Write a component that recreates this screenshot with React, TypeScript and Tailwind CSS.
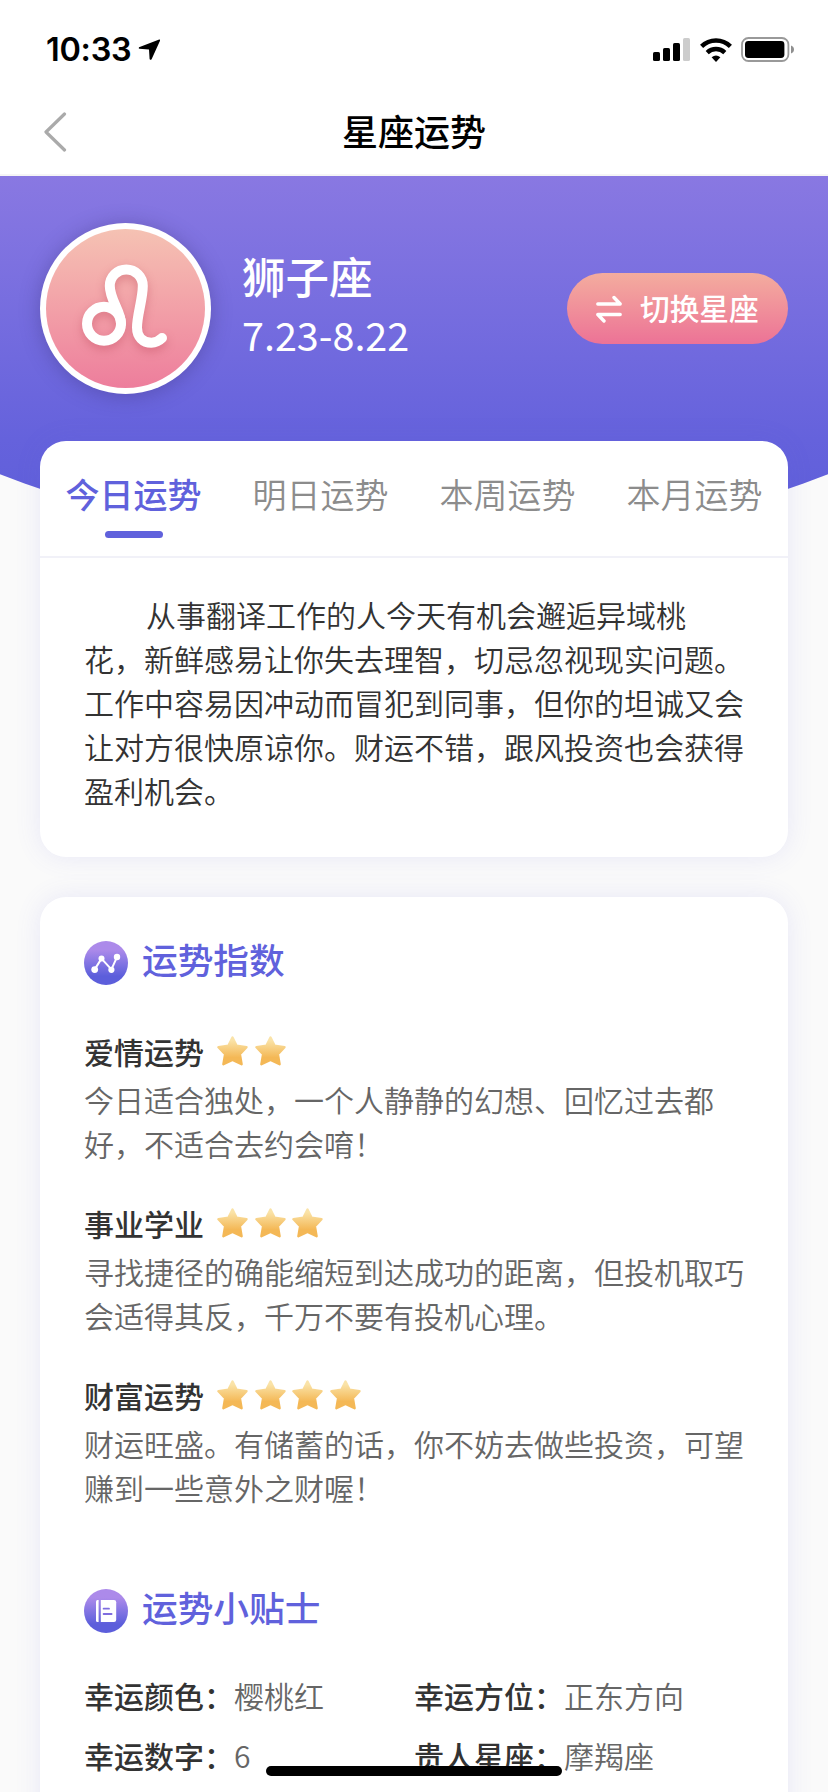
import React, { useState } from 'react';

interface FortuneItem {
    title: string;
    stars: number;
    lines: string[];
}

interface TipItem {
    label: string;
    value: string;
}

const tabs = ['今日运势', '明日运势', '本周运势', '本月运势'];

const summary = [
    '从事翻译工作的人今天有机会邂逅异域桃',
    '花，新鲜感易让你失去理智，切忌忽视现实问题。',
    '工作中容易因冲动而冒犯到同事，但你的坦诚又会',
    '让对方很快原谅你。财运不错，跟风投资也会获得',
    '盈利机会。',
];

const fortunes: FortuneItem[] = [
    { title: '爱情运势', stars: 2, lines: ['今日适合独处，一个人静静的幻想、回忆过去都', '好，不适合去约会唷！'] },
    { title: '事业学业', stars: 3, lines: ['寻找捷径的确能缩短到达成功的距离，但投机取巧', '会适得其反，千万不要有投机心理。'] },
    { title: '财富运势', stars: 4, lines: ['财运旺盛。有储蓄的话，你不妨去做些投资，可望', '赚到一些意外之财喔！'] },
];

const tips: TipItem[] = [
    { label: '幸运颜色：', value: '樱桃红' },
    { label: '幸运方位：', value: '正东方向' },
    { label: '幸运数字：', value: '6' },
    { label: '贵人星座：', value: '摩羯座' },
];

const StatusBar: React.FC = () => (
    <div className="flex h-[88px] items-start justify-between pl-[46px] pr-[33px] pt-[37px]">
        <div className="flex h-[25px] items-center gap-[7px]">
            <span className="pt-[2px] font-['Inter',sans-serif] text-[32.5px] font-semibold leading-none tracking-[-0.3px]">10:33</span>
            <svg width="23" height="22" viewBox="0 0 23 22">
                <path d="M21.2 0.5 L1 8.2 Q0.2 9.4 1.4 9.8 L11 10.6 L11.6 20 Q12.4 21.6 13.6 20.2 L22 1.8 Q22.4 0.4 21.2 0.5Z" />
            </svg>
        </div>
        <div className="flex h-[25px] items-center">
            <svg width="37" height="23" viewBox="0 0 37 23">
                <rect x="0" y="14" width="7" height="9" rx="1.6" />
                <rect x="10" y="10" width="7" height="13" rx="1.6" />
                <rect x="20" y="5" width="7" height="18" rx="1.6" />
                <rect x="30" y="0" width="7" height="23" rx="1.6" fill="#cccccc" />
            </svg>
            <svg className="ml-[10px]" width="32" height="24" viewBox="0 0 32 24">
                <g fill="none" stroke="#000" strokeWidth="4.4">
                    <path d="M1.6 8.4 A20.5 20.5 0 0 1 30.4 8.4" />
                    <path d="M7.2 14.6 A12.6 12.6 0 0 1 24.8 14.6" />
                </g>
                <path d="M11.6 19.3 Q16 15.6 20.4 19.3 L16 24Z" />
            </svg>
            <svg className="ml-[9px]" width="54" height="25" viewBox="0 0 54 25">
                <rect x="1" y="1" width="46.4" height="23" rx="6.5" fill="none" stroke="#999999" strokeWidth="1.8" />
                <rect x="4" y="4" width="39.4" height="17" rx="3.4" />
                <path d="M50 8.5 Q53 9.6 53 12.5 T50 16.5Z" fill="#8f8f8f" />
            </svg>
        </div>
    </div>
);

const LeoIcon: React.FC = () => (
    <svg width="171" height="171" viewBox="0 0 171 171" className="drop-shadow-[0_4px_5px_rgba(190,70,90,0.4)]">
        <g fill="none" stroke="#fff" strokeWidth="10" strokeLinecap="round">
            <circle cx="64" cy="100.8" r="17" />
            <path d="M81 100.6 C81 88 69.8 77 69.8 63 A16.5 16.5 0 0 1 102.8 63 C102.8 76 97 92 97 104.5 C97 114 103 119.7 111.4 119.7 C116.5 119.7 119 118 122 115" />
        </g>
    </svg>
);

const Star: React.FC = () => (
    <svg width="31" height="30" viewBox="0 0 31 30">
        <defs>
            <linearGradient id="star" x1="0" y1="0" x2="0" y2="1">
                <stop offset="0.1" stopColor="#fae3a8" />
                <stop offset="0.75" stopColor="#f4b856" />
            </linearGradient>
        </defs>
        <path
            d="M15.5 1.5 L19.6 9.8 L29.5 11.2 L22.9 18.2 L24.6 28.2 L15.5 23.8 L6.4 28.2 L8.1 18.2 L1.5 11.2 L11.4 9.8Z"
            fill="url(#star)"
            stroke="url(#star)"
            strokeWidth="2.4"
            strokeLinejoin="round"
        />
    </svg>
);

const ChartIcon: React.FC = () => (
    <svg width="44" height="44" viewBox="0 0 44 44">
        <path d="M10.7 28.4 L17.5 17.6 L27.4 28.4 L33 16.2" fill="none" stroke="#fff" strokeWidth="2" strokeLinejoin="round" />
        <g fill="#fff">
            <circle cx="10.7" cy="28.6" r="3.4" />
            <circle cx="17.5" cy="17.6" r="3" />
            <circle cx="27.4" cy="28.8" r="3.1" />
            <circle cx="33" cy="16" r="3.2" />
        </g>
    </svg>
);

const BookIcon: React.FC = () => (
    <svg width="44" height="44" viewBox="0 0 44 44">
        <path d="M13.5 11 H14.6 V33 H13.5 Q12 33 12 31.5 V12.5 Q12 11 13.5 11Z" fill="#fff" />
        <path d="M16.8 11 H30 Q32.2 11 32.2 13.2 V30.8 Q32.2 33 30 33 H16.8Z" fill="#fff" />
        <path d="M19.6 19.7 H25 M19.6 25 H27.6" stroke="#7f6ddf" strokeWidth="1.8" strokeLinecap="round" />
    </svg>
);

const SectionTitle: React.FC<{ icon: React.ReactNode; children: React.ReactNode }> = ({ icon, children }) => (
    <div className="flex h-[44px] items-center gap-[14px]">
        <div className="size-[44px] rounded-full bg-linear-to-b from-[#ac8aea] from-20% to-[#5c5edb] to-80%">{icon}</div>
        <h2 className="-mt-[9px] text-[35.7px] font-medium leading-[44px] text-[#6061dc]">{children}</h2>
    </div>
);

const App: React.FC = () => {
    const [activeTab, setActiveTab] = useState<number>(0);

    return (
        <div className="relative h-[1792px] w-[828px] overflow-hidden bg-[#fafafa] font-['Noto_Sans_CJK_SC',sans-serif] text-[#333333]">
            <header className="border-b-2 border-[#f5f5f5] bg-white text-black">
                <StatusBar />
                <div className="grid h-[86px] grid-cols-3 items-center px-[44px]">
                    <button type="button" className="w-fit pt-[2px]">
                        <svg width="23" height="40" viewBox="0 0 23 40">
                            <path d="M20.5 2 L2 20 L20.5 38" fill="none" stroke="#aaaaaa" strokeWidth="3.2" strokeLinecap="round" strokeLinejoin="round" />
                        </svg>
                    </button>
                    <h1 className="-mt-[2px] text-center text-[36px] font-medium leading-[52px]">星座运势</h1>
                </div>
            </header>

            <section className="h-[376px] bg-linear-to-b from-[#8978e2] from-0% via-[#6562dc] via-70% to-[#5c5dd8] px-10 pt-[47px] [clip-path:circle(1156px_at_50%_-781px)]">
                <div className="flex items-center">
                    <div className="flex size-[171px] items-center justify-center rounded-full bg-white shadow-[0_2px_20px_rgba(60,50,120,0.4)]">
                        <div className="flex size-[159px] items-center justify-center rounded-full bg-linear-to-b from-[#f5c2b3] to-[#ed7d9c]">
                            <div className="shrink-0">
                                <LeoIcon />
                            </div>
                        </div>
                    </div>
                    <div className="-mt-[11px] ml-[31px] text-white">
                        <p className="text-[43.5px] font-medium leading-[60px]">狮子座</p>
                        <p className="text-[39.5px] leading-[55px]">7.23-8.22</p>
                    </div>
                    <button type="button" className="ml-auto flex h-[71px] w-[221px] items-center rounded-full bg-linear-to-b from-[#f3ac9e] to-[#ec7296] pl-[29px] text-white">
                        <svg width="26" height="28" viewBox="0 0 26 28">
                            <path d="M1.8 9 H24.2 L18 2.5 M24.2 19.5 H1.8 L8 26" fill="none" stroke="#fff" strokeWidth="3.4" strokeLinecap="round" strokeLinejoin="round" />
                        </svg>
                        <span className="-mt-[1px] ml-[18px] text-[29.7px] font-medium leading-[44px]">切换星座</span>
                    </button>
                </div>
            </section>

            <main className="relative -mt-[111px] flex flex-col gap-10 px-10">
                <section className="h-[416px] rounded-[26px] bg-white shadow-[0_0_26px_rgba(96,97,220,0.12)]">
                    <div className="grid h-[117px] grid-cols-4 border-b-2 border-[#f1f1f8]">
                        {tabs.map((tab, index) => (
                            <button
                                key={tab}
                                type="button"
                                onClick={() => setActiveTab(index)}
                                className={`flex flex-col items-center pt-[29px] text-[34px] leading-[48px] ${activeTab === index ? 'font-medium text-[#6061dc]' : 'font-[350] text-[#8c8c8c]'}`}
                            >
                                {tab}
                                {activeTab === index && <span className="mt-[13px] h-[7px] w-[58px] rounded-full bg-[#6061dc]" />}
                            </button>
                        ))}
                    </div>
                    <p className="whitespace-nowrap px-[44px] pt-[34px] indent-[62px] text-[30px] font-[350] leading-[44px]">
                        {summary.map((line, index) => (
                            <React.Fragment key={line}>
                                {index > 0 && <br />}
                                {line}
                            </React.Fragment>
                        ))}
                    </p>
                </section>

                <section className="h-[1000px] rounded-[26px] bg-white px-[44px] pt-[44px] shadow-[0_0_26px_rgba(96,97,220,0.12)]">
                    <SectionTitle icon={<ChartIcon />}>运势指数</SectionTitle>
                    <div className="mt-[44px] flex flex-col gap-[36px]">
                        {fortunes.map((item) => (
                            <div key={item.title} className="h-[136px]">
                                <div className="flex h-[44px] items-center">
                                    <h3 className="text-[30px] font-medium leading-[44px]">{item.title}</h3>
                                    <div className="ml-[13px] flex gap-[6.7px]">
                                        {Array.from({ length: item.stars }, (_, i) => (
                                            <Star key={i} />
                                        ))}
                                    </div>
                                </div>
                                <div className="mt-[4px] whitespace-nowrap text-[30px] font-[350] leading-[44px] text-[#666666]">
                                    {item.lines.map((line) => (
                                        <p key={line}>{line}</p>
                                    ))}
                                </div>
                            </div>
                        ))}
                    </div>

                    <div className="mt-[80px]">
                        <SectionTitle icon={<BookIcon />}>运势小贴士</SectionTitle>
                    </div>
                    <div className="mt-[40px] grid grid-cols-2 gap-y-[16px] text-[30px] leading-[44px]">
                        {tips.map((tip) => (
                            <p key={tip.label}>
                                <span className="font-medium">{tip.label}</span>
                                <span className="font-[350] text-[#666666]">{tip.value}</span>
                            </p>
                        ))}
                    </div>
                </section>
            </main>

            {/* home indicator */}
            <div className="absolute bottom-[16px] left-[266px] h-[10px] w-[296px] rounded-full bg-black" />
        </div>
    );
};

export default App;
